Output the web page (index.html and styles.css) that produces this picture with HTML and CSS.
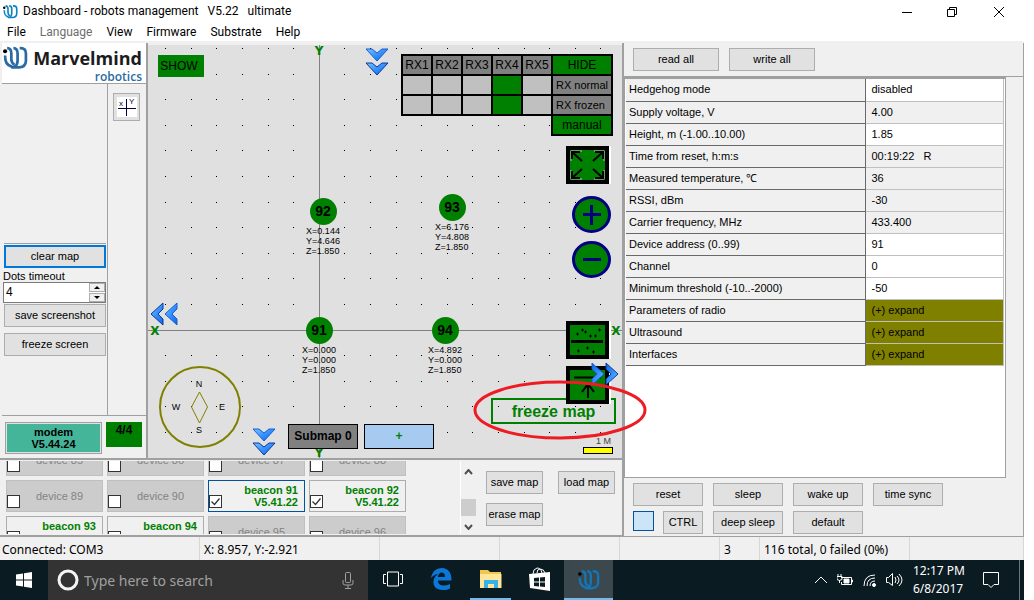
FILE: index.html
```html
<!DOCTYPE html>
<html lang="en">
<head>
<meta charset="utf-8">
<title>Dashboard - robots management</title>
<link rel="stylesheet" href="styles.css">
</head>
<body>
<svg class="defs" width="0" height="0" aria-hidden="true">
  <defs>
    <symbol id="mark" viewBox="0 0 24 22">
      <g fill="none" stroke="currentColor" stroke-width="2.600">
        <path d="M2 9c0 6 1 9 7 11"/>
        <path d="M4 2q4 0 4 5v6q0 3 3 5"/>
        <path d="M10 2q4 0 4 5v7q0 4-3 6"/>
        <path d="M16 2h1q5 0 5 5v7q0 6-7 6.500H8"/>
      </g>
      <circle class="mark-dot" cx="2" cy="5" r="2"/>
    </symbol>
    <linearGradient id="blue" x1="0" y1="0" x2="1" y2="1">
      <stop offset="0" stop-color="#7cc4ff"/><stop offset=".5" stop-color="#3590ff"/><stop offset="1" stop-color="#1260e0"/>
    </linearGradient>
    <symbol id="chev-down" viewBox="0 0 24 28">
      <path d="M1 1h6l5 4 5-4h6L12 13z" fill="url(#blue)" stroke="#1560d0"/>
      <path d="M1 15h6l5 4 5-4h6L12 27z" fill="url(#blue)" stroke="#0a3a98"/>
    </symbol>
    <symbol id="chev-left" viewBox="0 0 28 24">
      <path d="M13 1v6l-5 5 5 5v6L1 12z" fill="url(#blue)" stroke="#0a3a98"/>
      <path d="M27 1v6l-5 5 5 5v6L15 12z" fill="url(#blue)" stroke="#1560d0"/>
    </symbol>
  </defs>
</svg>

<div class="window">
  <header class="titlebar">
    <span class="app-icon"><svg width="15" height="15"><use href="#mark"/></svg></span>
    <h1 class="title">Dashboard - robots management <span>V5.22</span> <span>ultimate</span></h1>
    <div class="win-buttons">
      <button aria-label="Minimize"><svg width="10" height="10"><path d="M0 5.500h10" stroke="#000"/></svg></button>
      <button aria-label="Restore"><svg width="10" height="10" fill="none" stroke="#000"><path d="M.5 2.500h7v7h-7zM2.500 2V.5h7v7H8"/></svg></button>
      <button aria-label="Close"><svg width="10" height="10"><path d="M0 0l10 10M10 0L0 10" stroke="#000"/></svg></button>
    </div>
  </header>
  <nav class="menu">
    <button>File</button><button class="dim">Language</button><button>View</button><button>Firmware</button><button>Substrate</button><button>Help</button>
  </nav>

  <main class="main">
    <div class="workspace">
      <div class="upper">
        <aside class="side">
          <div class="brand">
            <svg class="brand-mark" width="25" height="23"><use href="#mark"/></svg>
            <div class="brand-text"><strong>Marvelmind</strong><span>robotics</span></div>
          </div>
          <div class="side-body">
            <div class="side-tools">
              <div class="side-blank"></div>
              <button class="btn focus">clear map</button>
              <label class="side-label" for="dots">Dots timeout</label>
              <div class="spin">
                <input id="dots" type="text" value="4">
                <div class="spin-btns"><button aria-label="Increase"><i class="up"></i></button><button aria-label="Decrease"><i class="down"></i></button></div>
              </div>
              <button class="btn">save screenshot</button>
              <button class="btn gap">freeze screen</button>
            </div>
            <div class="side-xy">
              <button class="xy" aria-label="XY plane">
                <svg width="20" height="20"><path fill="#fff" d="M0 0h20v20H0z"/><path d="M1 11.500h18M9.500 2v17" stroke="#000040"/><text x="2" y="9">x</text><text x="12" y="7">Y</text></svg>
              </button>
            </div>
          </div>
          <div class="side-foot">
            <button class="modem">modem<br>V5.44.24</button>
            <span class="count">4/4</span>
          </div>
        </aside>

        <section class="map" aria-label="Map">
          <svg class="grid" width="100%" height="100%">
            <defs>
              <pattern id="dots-pattern" x="17" y="3" width="128" height="128" patternUnits="userSpaceOnUse">
                <path d="M0 .5h128M0 26.500h128M0 51.500h128M0 77.500h128M0 102.500h128" stroke="#000" stroke-dasharray="1 25 1 24 1 25 1 25 1 24" shape-rendering="crispEdges"/>
              </pattern>
            </defs>
            <rect width="100%" height="100%" fill="url(#dots-pattern)"/>
            <path d="M0 285.500h474M171.500 0v414" stroke="#808080"/>
            <g class="compass">
              <circle cx="52" cy="362" r="40" fill="none" stroke="#808000" stroke-width="2"/>
              <path d="M51.500 347l8 15-8 16-8-16z" fill="none" stroke="#808000"/>
              <text x="51" y="342">N</text><text x="28" y="365">W</text><text x="74" y="365">E</text><text x="51" y="388">S</text>
            </g>
            <g class="axis">
              <text x="171" y="10">Y</text><text x="171" y="412">Y</text><text x="7" y="290">X</text><text x="468" y="290">X</text>
            </g>
          </svg>

          <button class="show">SHOW</button>
          <button class="pan pan-up" aria-label="Pan up"><svg width="24" height="28"><use href="#chev-down"/></svg></button>
          <button class="pan pan-left" aria-label="Pan left"><svg width="28" height="26"><use href="#chev-left"/></svg></button>
          <button class="pan pan-down" aria-label="Pan down"><svg width="24" height="28"><use href="#chev-down"/></svg></button>

          <table class="rx">
            <tr><th>RX1</th><th>RX2</th><th>RX3</th><th>RX4</th><th>RX5</th><td class="on wide"><button>HIDE</button></td></tr>
            <tr><td></td><td></td><td></td><td class="on"></td><td></td><th class="wide name">RX normal</th></tr>
            <tr><td></td><td></td><td></td><td class="on"></td><td></td><th class="wide name">RX frozen</th></tr>
            <tr><td class="none" colspan="5"></td><td class="on wide"><button>manual</button></td></tr>
          </table>

          <div class="node n92"><b>92</b><span>X=0.144<br>Y=4.646<br>Z=1.850</span></div>
          <div class="node n93"><b>93</b><span>X=6.176<br>Y=4.808<br>Z=1.850</span></div>
          <div class="node n91"><b>91</b><span>X=0.000<br>Y=0.000<br>Z=1.850</span></div>
          <div class="node n94"><b>94</b><span>X=4.892<br>Y=0.000<br>Z=1.850</span></div>

          <button class="freeze">freeze map</button>
          <button class="submap">Submap 0</button>
          <button class="addmap">+</button>
          <div class="scale">1 M</div>

          <button class="tool fit" aria-label="Fit map"><svg width="43" height="38"><path class="box" d="M2 2h39v34H2z"/><g fill="none" stroke="#c0c0c0" stroke-width="1"><path d="M5 15V5h11M28 5h10v10M5 24v9h11M28 33h10v-9"/></g><path d="M6 6l10 9M6 13V6h8M37 6l-10 9M29 6h8v7M6 32l10-9M6 25v7h8M37 32l-10-9M29 32h8v-7" fill="none" stroke="#000" stroke-width="2"/></svg></button>
          <button class="tool zin" aria-label="Zoom in"><svg width="39" height="37"><ellipse cx="19.500" cy="18.500" rx="18" ry="17" fill="green" stroke="navy" stroke-width="3"/><path d="M11 18.500h18M19.500 9v20" stroke="navy" stroke-width="3"/></svg></button>
          <button class="tool zout" aria-label="Zoom out"><svg width="39" height="37"><ellipse cx="19.500" cy="18.500" rx="18" ry="17" fill="green" stroke="navy" stroke-width="3"/><path d="M11 18.500h18" stroke="navy" stroke-width="3"/></svg></button>
          <button class="tool split" aria-label="Show dots"><svg width="43" height="38"><path class="box" d="M2 2h39v34H2z"/><path d="M5 20.500h32" stroke="#000" stroke-width="3"/><path d="M10 13h3M15 9h3M18 11h3M23 15h3M28 15h3M32 9h3M11 30h3M20 27h3M26 31h3M11.500 11.500v3M16.500 7.500v3M19.500 9.500v3M24.500 13.500v3M29.500 13.500v3M33.500 7.500v3M12.500 28.500v3M21.500 25.500v3M27.500 29.500v3" stroke="#000"/></svg></button>
          <button class="tool north" aria-label="Move to line"><svg width="43" height="38"><path class="box" d="M2 2h39v34H2z"/><path d="M8 11.500h27M22 32V18M16 26l6-8 6 8" fill="none" stroke="#000" stroke-width="2"/></svg></button>
          <button class="pan pan-right" aria-label="Pan right"><svg width="28" height="26"><use href="#chev-left" transform="rotate(180 14 13)"/></svg></button>
          <svg class="callout" width="174" height="60"><ellipse cx="87" cy="30" rx="85" ry="28" fill="none" stroke="#ed1c24" stroke-width="3"/></svg>
        </section>
      </div>

      <section class="lower" aria-label="Devices">
        <div class="devices">
          <div class="device-grid">
            <label class="device"><input type="checkbox"><span>device 85</span></label>
            <label class="device"><input type="checkbox"><span>device 86</span></label>
            <label class="device"><input type="checkbox"><span>device 87</span></label>
            <label class="device"><input type="checkbox"><span>device 88</span></label>
            <label class="device"><input type="checkbox"><span>device 89</span></label>
            <label class="device"><input type="checkbox"><span>device 90</span></label>
            <label class="device live picked"><input type="checkbox" checked><span>beacon 91<br>V5.41.22</span></label>
            <label class="device live"><input type="checkbox" checked><span>beacon 92<br>V5.41.22</span></label>
            <label class="device live"><input type="checkbox"><span>beacon 93</span></label>
            <label class="device live"><input type="checkbox"><span>beacon 94</span></label>
            <label class="device"><input type="checkbox"><span>device 95</span></label>
            <label class="device"><input type="checkbox"><span>device 96</span></label>
          </div>
        </div>
        <div class="scroll">
          <svg width="9" height="6"><path d="M1 5l3.500-4L8 5" fill="none" stroke="#505050" stroke-width="2"/></svg>
          <i class="thumb"></i>
          <svg width="9" height="6"><path d="M1 1l3.500 4L8 1" fill="none" stroke="#505050" stroke-width="2"/></svg>
        </div>
        <div class="map-actions">
          <button class="btn">save map</button><button class="btn">load map</button><button class="btn">erase map</button>
        </div>
      </section>
    </div>

    <section class="props">
      <div class="props-top"><button class="btn">read all</button><button class="btn">write all</button></div>
      <div class="props-body">
        <table class="ptable">
          <tr class="edit"><th>Hedgehog mode</th><td>disabled</td></tr>
          <tr><th>Supply voltage, V</th><td>4.00</td></tr>
          <tr class="edit"><th>Height, m (-1.00..10.00)</th><td>1.85</td></tr>
          <tr><th>Time from reset, h:m:s</th><td>00:19:22 &nbsp; R</td></tr>
          <tr><th>Measured temperature, ℃</th><td>36</td></tr>
          <tr><th>RSSI, dBm</th><td>-30</td></tr>
          <tr><th>Carrier frequency, MHz</th><td>433.400</td></tr>
          <tr class="edit"><th>Device address (0..99)</th><td>91</td></tr>
          <tr class="edit"><th>Channel</th><td>0</td></tr>
          <tr class="edit"><th>Minimum threshold (-10..-2000)</th><td>-50</td></tr>
          <tr class="more"><th>Parameters of radio</th><td>(+) expand</td></tr>
          <tr class="more"><th>Ultrasound</th><td>(+) expand</td></tr>
          <tr class="more"><th>Interfaces</th><td>(+) expand</td></tr>
        </table>
      </div>
      <div class="props-foot">
        <button class="btn">reset</button><button class="btn">sleep</button><button class="btn">wake up</button><button class="btn">time sync</button>
        <div class="pair"><button class="swatch" aria-label="Indicator"></button><button class="btn ctrl">CTRL</button></div><button class="btn">deep sleep</button><button class="btn">default</button>
      </div>
    </section>
  </main>

  <footer class="status">
    <span class="s-conn">Connected: COM3</span><span class="s-pos">X: 8.957, Y:-2.921</span><span class="s-mid"></span><span class="s-mid"></span><span class="s-gap"></span><span class="s-num">3</span><span class="s-total">116 total, 0 failed (0%)</span><span class="s-rest"></span>
  </footer>

  <div class="taskbar">
    <button class="start" aria-label="Start"><svg width="16" height="16" fill="#fff"><path d="M0 2.500l7-1v6H0zM8 1.300L16 0v7.500H8zM0 8.500h7v6l-7-1zM8 8.500h8V16l-8-1.200z"/></svg></button>
    <div class="search">
      <svg width="22" height="22"><circle cx="11" cy="11" r="9" fill="none" stroke="#f4f4f4" stroke-width="3"/></svg>
      <input type="text" placeholder="Type here to search" aria-label="Search">
      <svg width="12" height="17" fill="none" stroke="#a0a0a0"><rect x="3.500" y=".5" width="5" height="10" rx="1"/><path d="M1 8v3q0 2 2 2h6q2 0 2-2V8M6 13v3M3 16.500h6"/></svg>
    </div>
    <button class="task" aria-label="Task view"><svg width="20" height="16" fill="none" stroke="#fff"><path d="M4.500 1h11v14h-11zM3 3.500H.5v9H3M17 3.500h2.500v9H17"/></svg></button>
    <button class="task" aria-label="Edge"><svg width="21" height="22"><path fill="#0a78d8" d="M0 10C1 4 5 0 11 0c6 0 10 5 9.500 12.500H7c0 4 3 5 6 5 2 0 4-.5 6-1.500v4.500c-2 1-4 1.500-7 1.500C5 22 2 18 2.500 13 3 9.500 5 7 8 6 4 6 2 8 0 10zM7 9h7c0-3-1-4.500-3.500-4.500C8.500 4.500 7 7 7 9z"/></svg></button>
    <button class="task open" aria-label="File Explorer"><svg width="22" height="18"><path fill="#f0c850" d="M0 0h8l2 2h11v4H0z"/><path fill="#ffe69a" d="M0 4h21.500v14H0z"/><path fill="#38b0e8" d="M4 18v-8h14v8h-4v-4H8v4z"/></svg></button>
    <button class="task" aria-label="Store"><svg width="22" height="24"><path d="M4 7q0-5 4-6 4 0 5 5M8 6q0-4 3-4 4 0 5 4" fill="none" stroke="#fff"/><path fill="#fff" d="M0 7l21-2v19L1 21z"/><path fill="#0b1b22" d="M5 11l5-.5v4H5zM11 10.500l5-.5v4.500h-5zM5 15.500h5v4l-5-.5zM11 15.500h5V20l-5-.5z"/></svg></button>
    <button class="task open active" aria-label="Dashboard"><svg width="22" height="21"><use href="#mark"/></svg></button>
    <div class="tray">
      <svg width="12" height="8"><path d="M0 7l6-6 6 6" fill="none" stroke="#fff"/></svg>
      <svg width="16" height="12" fill="none" stroke="#fff"><path d="M4 3.500h10.500v7h-10V8M14.500 6h1v2h-1M0 2.500h5v3q-2.500 2-5 0zM1 0v2M4 0v2M2.500 6v3"/><path d="M7 5h5v4H7z" fill="#fff"/></svg>
      <svg width="13" height="13" fill="none" stroke="#fff"><path d="M1 12Q1 1 12 1M4 12q0-8 8-8M7 12q0-5 5-5"/><circle cx="11" cy="11" r="1.500" fill="#fff"/></svg>
      <svg width="17" height="14" fill="none" stroke="#fff"><path d="M.5 4.500h2l4-4v12l-4-3h-2zM9 4q2 3 0 6M11 3q4 4 0 8M13 1q6 6 0 12"/></svg>
      <div class="clock">12:17 PM<br>6/8/2017</div>
      <svg class="note" width="16" height="16" fill="none" stroke="#fff"><path d="M.5 .5h15v12H11l-3 3-3-3H.5z"/></svg>
      <i class="peek"></i>
    </div>
  </div>
</div>
</body>
</html>
```
FILE: styles.css
```css
* { box-sizing: border-box; }
body {
  margin: 0;
  padding-right: 10px;
  background: #fff;
  color: #000;
  font: 11px/13px "Liberation Sans", Arial, sans-serif;
}
button, input { font: inherit; color: inherit; padding: 0; margin: 0; border: 0; background: none; border-radius: 0; }
svg { display: block; }
.defs { position: absolute; }
.window { min-height: 100vh; display: flex; flex-direction: column; }

/* title and menu */
.status, .clock, .search { font-family: "Noto Sans", "Open Sans", sans-serif; }
.titlebar, .menu { font-family: Roboto, "Open Sans", sans-serif; }
.titlebar { height: 23px; display: flex; align-items: center; padding-left: 3px; }
.app-icon { color: #0a84c0; width: 20px; }
.title { flex: 1; margin: 0; font-size: 12px; font-weight: 400; }
.title span { margin-left: 6px; }
.win-buttons { display: flex; }
.win-buttons button { width: 45px; height: 20px; display: grid; place-items: center; }
.win-buttons button:last-child { width: 50px; }
.menu { height: 20px; display: flex; gap: 14px; padding: 0 7px; font-size: 12px; border-bottom: 2px solid #f0f0f0; }
.dim { color: #6d6d6d; }

.main { flex: 1; display: flex; background: #f0f0f0; }
.workspace { flex: 1; display: flex; flex-direction: column; border-right: 2px solid #a0a0a0; }
.upper { flex: 1; display: flex; border-bottom: 2px solid #a0a0a0; }

.btn { height: 23px; background: #e1e1e1; border: 1px solid #adadad; white-space: nowrap; }
.focus { border: 2px solid #0078d7; }

/* left side */
.side { width: 148px; padding-left: 2px; display: flex; flex-direction: column; border-right: 2px solid #a0a0a0; }
.brand { height: 41px; display: flex; gap: 5px; padding: 3px 4px 0 1px; background: #fff; border-bottom: 1px solid #a0a0a0; }
.brand-mark { color: #2a6aa5; }
.brand-text { flex: 1; display: flex; flex-direction: column; align-items: flex-end; color: #1c1c20; font-family: "Open Sans", sans-serif; }
.brand-text strong { font-size: 18px; line-height: 24px; }
.brand-text span { color: #2a6aa5; font-size: 12px; line-height: 13px; font-weight: 600; }
.side-body { flex: 1; display: flex; }
.side-tools { width: 106px; display: flex; flex-direction: column; padding: 0 1px 0 2px; border-right: 1px solid #a0a0a0; }
.side-blank { height: 160px; border-bottom: 1px solid #a0a0a0; margin-bottom: 1px; }
.side-label { margin: 2px 0 0 -1px; line-height: 12px; }
.spin { height: 21px; display: flex; margin: 0 0 1px -1px; background: #fff; border: 1px solid #7a7a7a; }
.spin input { flex: 1; min-width: 0; padding-left: 2px; font-size: 12px; }
.spin-btns { width: 16px; display: flex; flex-direction: column; gap: 1px; background: #fff; }
.spin-btns button { flex: 1; display: grid; place-items: center; border: 1px solid #adadad; background: #f0f0f0; }
.up, .down { border: 3px solid transparent; border-top-width: 0; border-bottom-color: #000; }
.down { border-top: 3px solid #000; border-bottom: 0; }
.gap { margin-top: 6px; }
.side-xy { padding: 9px 0 0 5px; }
.xy { width: 27px; height: 28px; display: grid; place-items: center; border: 1px solid #adadad; background: #e1e1e1; }
.xy text { font-size: 8px; fill: #000040; }
.side-foot { height: 43px; display: flex; align-items: flex-start; gap: 4px; padding: 6px 3px; border-top: 1px solid #a0a0a0; }
.modem { width: 97px; height: 32px; background: #45b59a; border: 1px solid #a0a0a0; outline: 1px solid #e1e1e1; outline-offset: -2px; font-weight: 700; line-height: 12px; }
.count { width: 36px; height: 25px; padding-top: 2px; background: green; font-size: 12px; font-weight: 700; text-align: center; }

/* map canvas */
.map { flex: 1; position: relative; margin-top: 2px; background: #e0e0e0; }
.grid { position: absolute; inset: 0; }
.grid text { text-anchor: middle; }
.compass { font-size: 9px; }
.axis { font: 700 12px "DejaVu Sans", sans-serif; fill: green; }
.map button, .node, .scale, .rx, .callout { position: absolute; }
.map .show { left: 10px; top: 10px; width: 46px; height: 22px; padding-right: 4px; background: green; font-size: 12px; }
.pan-up { left: 217px; top: 3px; }
.pan-left { left: 2px; top: 256px; }
.pan-down { left: 104px; top: 383px; }
.pan-right { right: 3px; top: 316px; }
.rx { right: 9px; top: 9px; border-collapse: collapse; font-size: 12px; table-layout: fixed; width: 212px; }
.rx th, .rx td { height: 20px; padding: 1px 0 0; border: 2px solid #000; font-weight: 400; background: #808080; white-space: nowrap; }
.rx td { background: #c0c0c0; }
.rx .on { background: green; }
.rx .wide { width: 60px; }
.rx .name { text-align: left; padding-left: 3px; font-size: 11px; }
.rx .none { background: none; border-left: 0; border-bottom: 0; }
.map .rx button { position: static; display: block; width: 100%; }
.node { width: 60px; margin: -13px 0 0 -30px; display: flex; flex-direction: column; align-items: center; font-size: 9px; line-height: 10px; }
.node b { width: 27px; height: 27px; border-radius: 50%; background: green; font-size: 14px; line-height: 27px; text-align: center; }
.node span { margin-top: 1px; }
.n92 { left: 175px; top: 166px; }
.n93 { left: 304px; top: 162px; }
.n91 { left: 171px; top: 285px; }
.n94 { left: 297px; top: 285px; }
.map .freeze { right: 6px; top: 353px; width: 125px; height: 26px; border: 2px solid green; color: green; font-size: 16px; font-weight: 700; }
.submap, .addmap { top: 379px; height: 25px; width: 70px; border: 1px solid #000; font-size: 12px; font-weight: 700; }
.submap { left: 140px; background: #808080; }
.addmap { left: 216px; background: #a6caf0; color: green; }
.scale { right: 9px; top: 391px; width: 30px; text-align: right; padding-right: 2px; font-size: 9px; line-height: 11px; color: #404040; }
.scale::after { content: ""; display: block; height: 5px; margin-right: -2px; background: #ff0; border: 1px solid #000; }
.box { fill: green; stroke: #000; stroke-width: 4; }
.fit, .split, .north { right: 13px; box-shadow: 2px 0 #fff; }
.fit { top: 101px; }
.zin { right: 11px; top: 151px; }
.zout { right: 11px; top: 196px; }
.split { top: 276px; }
.north { top: 321px; }
.callout { right: -25px; top: 335px; z-index: 2; pointer-events: none; }

/* devices */
.lower { height: 77px; display: flex; border-bottom: 2px solid #a0a0a0; }
.devices { width: 461px; height: 73px; overflow: hidden; margin-top: 1px; padding-left: 6px; border-right: 1px solid #fff; }
.device-grid { display: grid; grid-template-columns: repeat(4, 97px); gap: 4px; margin-top: -17px; }
.device { height: 32px; display: flex; align-items: flex-start; background: #ccc; border: 1px solid #bfbfbf; color: #838383; }
.device span { flex: 1; padding: 9px 0 0 16px; line-height: 12px; }
.device input { appearance: none; flex: none; width: 13px; height: 13px; margin: 14px 0 0 0; border: 1px solid #333; background: #fff; }
.device input:checked { background: #fff url("data:image/svg+xml,%3Csvg xmlns='http://www.w3.org/2000/svg' width='11' height='11'%3E%3Cpath d='M1.500 5.500l3 3 5-6' fill='none' stroke='%23333' stroke-width='1.300'/%3E%3C/svg%3E"); }
.live { background: #f0f0f0; border-color: #adadad; color: green; }
.live span { padding: 3px 6px 0 0; text-align: right; font-weight: 700; }
.picked { border-color: #00539c; }
.scroll { width: 15px; margin-top: 2px; display: flex; flex-direction: column; align-items: center; padding: 7px 0 5px; }
.thumb { width: 15px; height: 17px; margin: 24px 0 auto; background: #cdcdcd; }
.map-actions { display: grid; grid-template-columns: 57px 57px; grid-auto-rows: 23px; gap: 9px 15px; padding: 11px 0 0 10px; }

/* property panel */
.props { width: 400px; display: flex; flex-direction: column; border-right: 1px solid #a0a0a0; }
.props-top { height: 34px; display: flex; gap: 10px; padding: 5px 9px; border-bottom: 1px solid #a0a0a0; }
.props-top .btn { width: 86px; }
.props-body { flex: 1; margin-right: 17px; padding: 0 1px 0 1px; background: #fff; border: 1px solid #a0a0a0; border-top-width: 2px; }
.ptable { width: 100%; border-collapse: collapse; table-layout: fixed; font-size: 11px; }
.ptable th, .ptable td { height: 22px; padding: 0 4px; text-align: left; font-weight: 400; background: #f0f0f0; border-bottom: 1px solid #c0c0c0; }
.ptable th { width: 239px; padding-left: 3px; border-bottom-color: #696969; border-right: 1px solid #696969; }
.ptable td { padding-left: 6px; border-right: 1px solid #c0c0c0; }
.ptable .edit td { background: #fff; }
.ptable .more td { background: #808000; }
.props-foot { height: 59px; display: grid; grid-template-columns: repeat(4, 70px); grid-auto-rows: 23px; gap: 5px 10px; padding: 5px 9px; border-bottom: 1px solid #a0a0a0; }
.pair { display: flex; justify-content: space-between; }
.swatch { width: 21px; height: 20px; background: #cce4f7; border: 1px solid #00539c; }
.ctrl { width: 40px; }

/* status bar */
.status { height: 23px; display: flex; background: #f0f0f0; font-size: 12px; line-height: 26px; }
.status span { width: 120px; padding-left: 4px; border-right: 1px solid #d7d7d7; white-space: nowrap; }
.status .s-conn { width: 200px; padding-left: 2px; }
.status .s-pos { width: 180px; }
.status .s-gap { width: 100px; flex: 1; }
.status .s-num { width: 40px; }
.status .s-total { width: 150px; }
.status .s-rest { width: 114px; }

/* taskbar */
.taskbar { height: 40px; display: flex; background: #0b1b22; color: #fff; }
.start { width: 48px; display: grid; place-items: center; }
.search { width: 320px; display: flex; align-items: center; gap: 5px; padding: 0 14px 0 9px; background: #333; }
.search input { flex: 1; min-width: 0; font-size: 14px; }
.search input::placeholder { color: #a0a0a0; }
.task { width: 49px; display: grid; place-items: center; border-bottom: 2px solid transparent; }
.open { border-color: #76b9ed; margin: 0 4px; width: 41px; }
.task.active { width: 49px; margin: 0; background: #3b494f; color: #1474b4; }
.mark-dot { fill: #000; }
.tray { margin-left: auto; display: flex; align-items: center; gap: 10px; }
.clock { width: 50px; text-align: center; font-size: 12px; line-height: 18px; white-space: nowrap; }
.note { margin: 0 10px; }
.peek { width: 5px; height: 40px; border-left: 1px solid #6a757a; }
```
